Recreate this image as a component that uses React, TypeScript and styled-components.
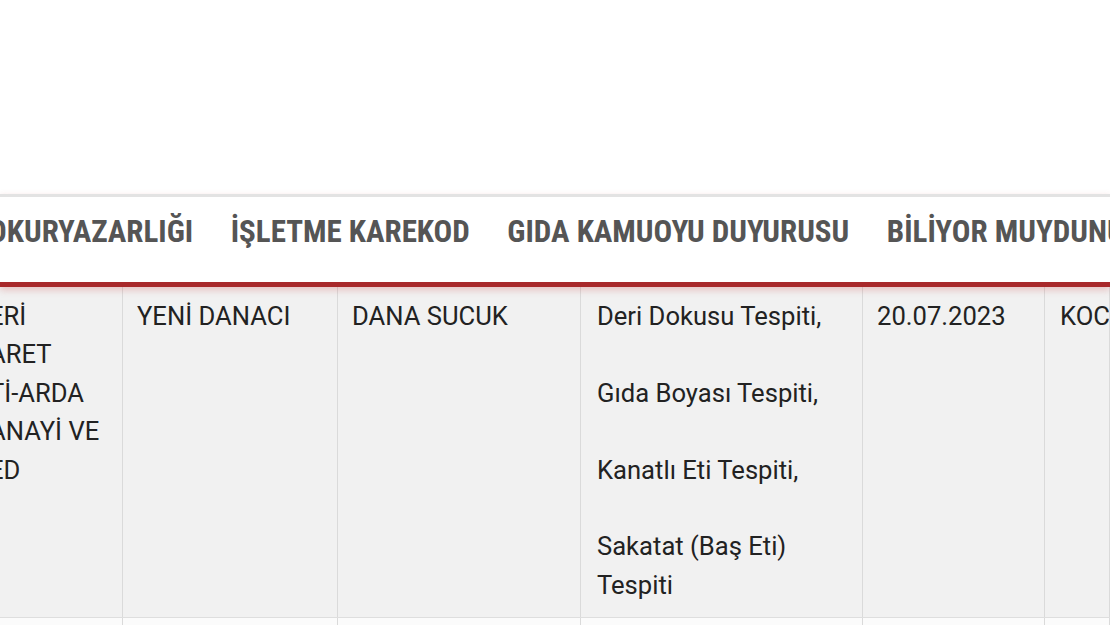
import React from "react";
import styled, { createGlobalStyle } from "styled-components";

const GlobalStyle = createGlobalStyle`
  html, body { margin: 0; padding: 0; background: #ffffff; }
  body { overflow: hidden; }
  * { box-sizing: border-box; }
`;

const Page = styled.div`
  width: 1110px;
  height: 625px;
  overflow: hidden;
  background: #ffffff;
  display: flex;
  flex-direction: column;
`;

const TopSpace = styled.div`
  height: 194px;
  flex: none;
`;

const NavBar = styled.nav`
  flex: none;
  height: 93px;
  background: #ffffff;
  border-top: 3px solid #e3e3e3;
  border-bottom: 5px solid #a8282a;
  box-shadow: 0 3px 7px rgba(200, 70, 70, 0.28);
  position: relative;
  z-index: 2;
  overflow: hidden;
`;

const NavTrack = styled.ul`
  list-style: none;
  margin: 0 0 0 -100px;
  padding: 0 0 16px 0;
  height: 100%;
  display: flex;
  align-items: center;
  white-space: nowrap;
`;

const NavItem = styled.li`
  padding: 0 18.75px;
  font-family: "Liberation Sans Narrow", "Arial Narrow", "Roboto Condensed", "Liberation Sans", sans-serif;
  font-weight: 700;
  font-size: 31px;
  color: #555555;
`;

const Table = styled.div`
  flex: 1;
  margin-left: -25px;
  display: flex;
  flex-direction: column;
  font-family: Roboto, "Noto Sans", sans-serif;
  font-size: 25.6px;
  line-height: 38.4px;
  color: #222222;
`;

const Row = styled.div<{ $light?: boolean }>`
  display: grid;
  grid-template-columns: 148px 215px 243px 282px 182px 1fr;
  background: ${(p) => (p.$light ? "#fbfbfb" : "#f1f1f1")};
  border-bottom: 1px solid #dedede;
`;

const Cell = styled.div<{ $inset?: number }>`
  padding: 10px 14px 13px ${(p) => p.$inset ?? 14}px;
  border-right: 1px solid #dadada;
  overflow: hidden;
`;

const Line = styled.span`
  display: block;
  white-space: nowrap;
`;

const Finding = styled.span`
  display: block;
  & + & {
    margin-top: 38.4px;
  }
`;

export default function App() {
  return (
    <Page>
      <GlobalStyle />
      <TopSpace />
      <NavBar>
        <NavTrack>
          <NavItem>GIDA OKURYAZARLIĞI</NavItem>
          <NavItem>İŞLETME KAREKOD</NavItem>
          <NavItem>GIDA KAMUOYU DUYURUSU</NavItem>
          <NavItem>BİLİYOR MUYDUNUZ</NavItem>
        </NavTrack>
      </NavBar>
      <Table>
        <Row>
          <Cell>
            <Line>ERİ</Line>
            <Line>ARET</Line>
            <Line>Tİ-ARDA</Line>
            <Line>ANAYİ VE</Line>
            <Line>ED</Line>
          </Cell>
          <Cell>YENİ DANACI</Cell>
          <Cell>DANA SUCUK</Cell>
          <Cell $inset={16}>
            <Finding>Deri Dokusu Tespiti,</Finding>
            <Finding>Gıda Boyası Tespiti,</Finding>
            <Finding>Kanatlı Eti Tespiti,</Finding>
            <Finding>Sakatat (Baş Eti) Tespiti</Finding>
          </Cell>
          <Cell>20.07.2023</Cell>
          <Cell $inset={15}>
            <Line>KOCAELİ</Line>
          </Cell>
        </Row>
        <Row $light>
          <Cell />
          <Cell />
          <Cell />
          <Cell />
          <Cell />
          <Cell />
        </Row>
      </Table>
    </Page>
  );
}
